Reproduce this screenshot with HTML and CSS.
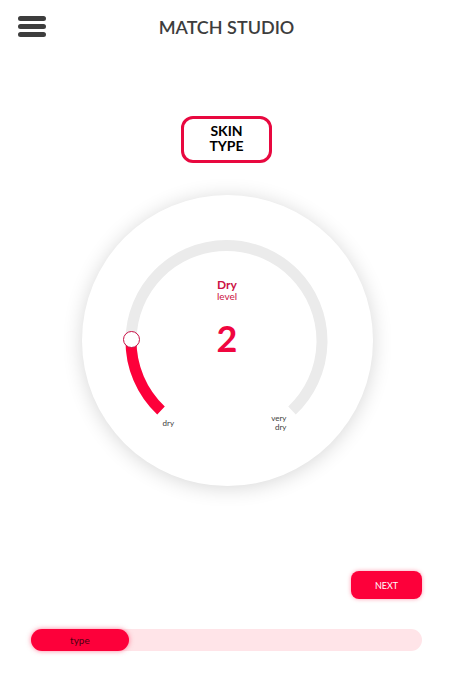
FILE: index.html
```html
<!DOCTYPE html>
<html lang="en">
<head>
<meta charset="utf-8">
<meta name="viewport" content="width=device-width, initial-scale=1">
<title>Match Studio</title>
<link rel="stylesheet" href="styles.css">
</head>
<body>
<header class="header">
  <button class="menu" type="button" aria-label="Menu">
    <svg class="menu-icon" viewBox="0 0 28 22" aria-hidden="true">
      <path d="M2.500 2.500H25.500M2.500 10.500H25.500M2.500 18.500H25.500" stroke="#3d3d3d" stroke-width="5" stroke-linecap="round"/>
    </svg>
  </button>
  <h1 class="title">MATCH STUDIO</h1>
</header>
<main class="main">
  <h2 class="topic">SKIN<br>TYPE</h2>
  <div class="dial">
    <svg class="gauge" viewBox="0 0 291 291" aria-hidden="true">
      <path d="M79 215.500A95.500 95.500 0 1 1 210 215.500" fill="none" stroke="#ebebeb" stroke-width="11"/>
      <path d="M49 145A95.500 95.500 0 0 0 79 215.500" fill="none" stroke="#fd003a" stroke-width="11"/>
      <circle cx="49.500" cy="144.500" r="8" fill="#fff" stroke="#c80f45" stroke-width="1"/>
    </svg>
    <div class="reading">
      <label class="name" for="level"><strong class="kind">Dry</strong>level</label>
      <output class="value" for="level">2</output>
    </div>
    <div class="limits">
      <span>dry</span>
      <span class="limit-max">very<br>dry</span>
    </div>
    <input class="range" id="level" type="range" min="0" max="10" value="2">
  </div>
  <button class="next" type="button">NEXT</button>
</main>
<footer class="footer">
  <div class="progress">
    <div class="step">type</div>
  </div>
</footer>
</body>
</html>
```
FILE: styles.css
```css
* {
  box-sizing: border-box;
}

body {
  margin: 0;
  min-height: 100vh;
  display: flex;
  flex-direction: column;
  background: #fff;
  color: #3d3d3d;
  font-family: Lato, "Liberation Sans", sans-serif;
}

.header {
  display: grid;
  grid-template-columns: 28px 1fr 28px;
  align-items: center;
  padding: 16px 18px;
}

.menu {
  padding: 0;
  border: 0;
  background: none;
}

.menu-icon {
  display: block;
  width: 28px;
  height: 22px;
}

.title {
  margin: 0;
  font-size: 18px;
  line-height: 22px;
  font-weight: 600;
  text-align: center;
}

.main {
  flex: 1;
  display: flex;
  flex-direction: column;
  align-items: center;
  padding: 62px 31px 30px;
}

.topic {
  width: 91px;
  margin: 0 0 32px;
  padding: 4px 0 7px;
  border: 3px solid #e8083f;
  border-radius: 12px;
  color: #000;
  font-size: 14px;
  line-height: 15px;
  font-weight: 700;
  text-align: center;
}

.dial {
  display: grid;
  width: 291px;
  margin-left: 1px;
  border-radius: 50%;
  background: #fff;
  box-shadow: 0 2px 20px rgba(0, 0, 0, 0.16);
}

.gauge,
.reading,
.limits,
.range {
  grid-area: 1 / 1;
}

.gauge {
  display: block;
  width: 100%;
}

.reading {
  display: flex;
  flex-direction: column;
  align-items: center;
  gap: 15px;
  padding: 83px 0 0;
  color: #cc1144;
}

.name {
  font-size: 10px;
  line-height: 10px;
  text-align: center;
}

.kind {
  display: block;
  font-size: 12px;
  line-height: 13px;
}

.value {
  color: #f0063f;
  font-size: 36px;
  line-height: 44px;
  font-weight: 700;
}

.limits {
  display: flex;
  justify-content: space-between;
  align-items: center;
  align-self: start;
  padding: 219px 86px 0 81px;
  font-size: 8px;
  line-height: 9px;
}

.limit-max {
  text-align: right;
}

.range {
  width: 100%;
  margin: 0;
  opacity: 0;
}

.next {
  align-self: flex-end;
  width: 71px;
  height: 28px;
  margin-top: auto;
  padding: 0;
  border: 0;
  border-radius: 8px;
  background: #fd003a;
  box-shadow: 0 0 4px rgba(253, 0, 58, 0.4);
  color: #fff;
  font-family: inherit;
  font-size: 9px;
}

.footer {
  padding: 0 31px 28px;
}

.progress {
  border-radius: 11px;
  background: #ffe4e8;
}

.step {
  width: 25%;
  border-radius: 11px;
  background: #fd003a;
  box-shadow: 0 0 5px rgba(253, 0, 58, 0.5);
  color: #4a0010;
  font-size: 10px;
  line-height: 22px;
  text-align: center;
}
```
